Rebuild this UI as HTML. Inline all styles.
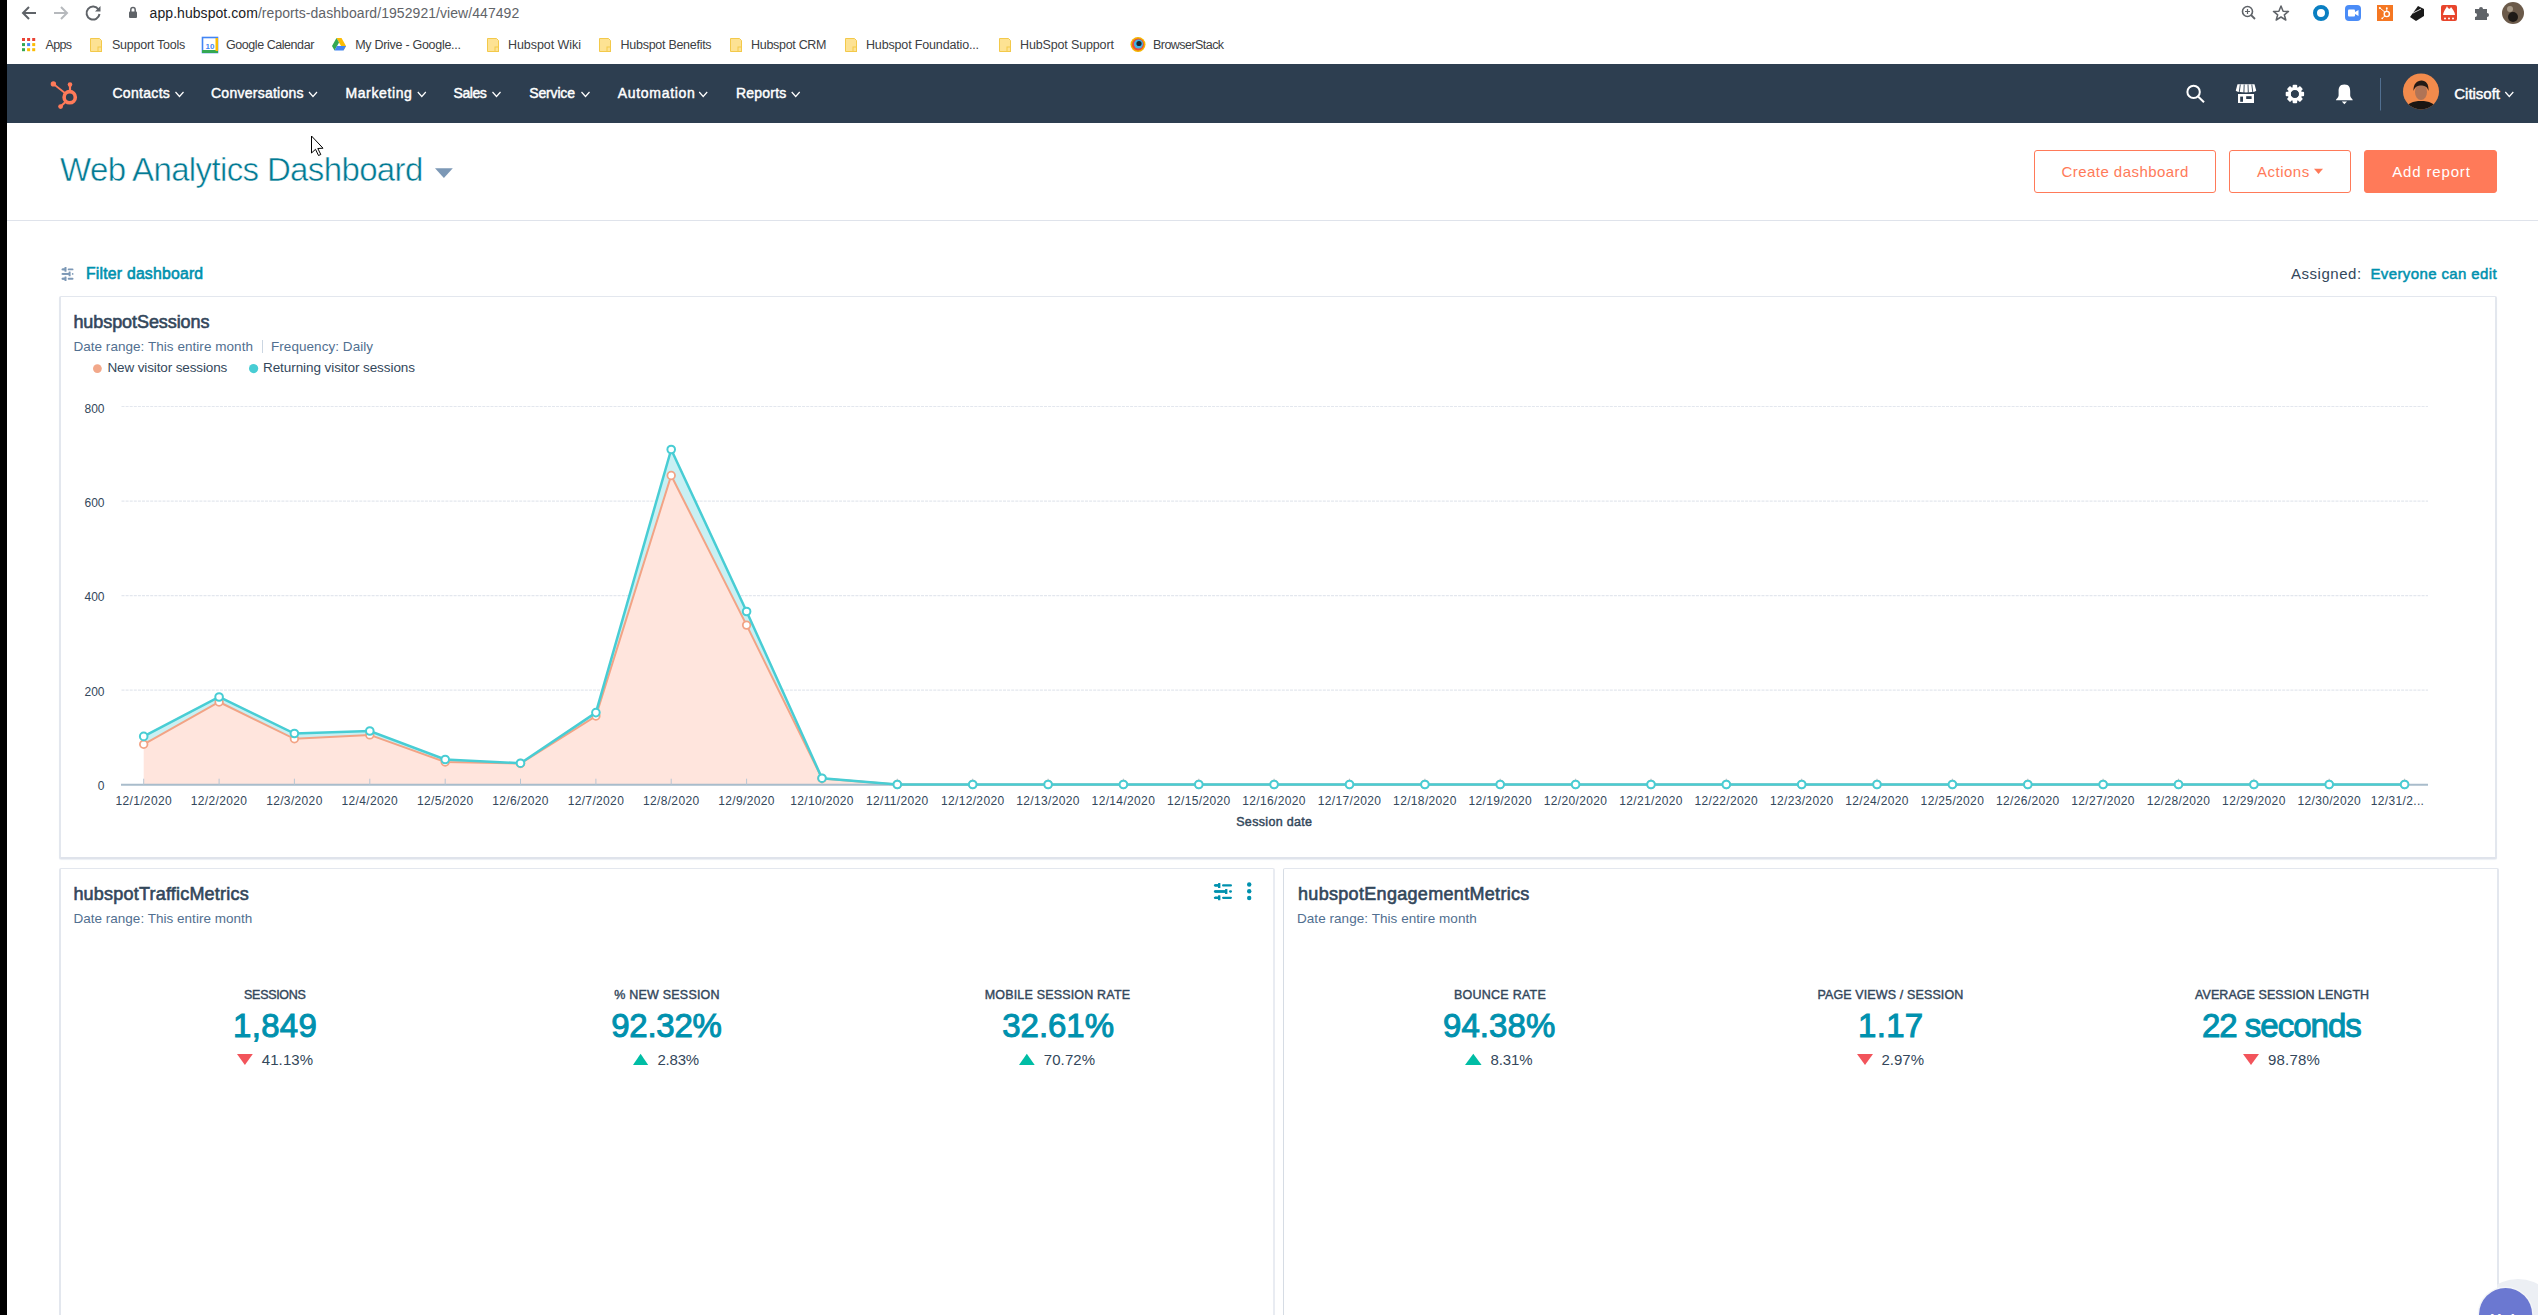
<!DOCTYPE html>
<html><head><meta charset="utf-8"><title>Web Analytics Dashboard</title>
<style>
html,body{margin:0;padding:0}
body{width:2538px;height:1315px;overflow:hidden;position:relative;background:#fff;font-family:"Liberation Sans",sans-serif;}
.t{position:absolute;white-space:nowrap;line-height:1;}
.abs{position:absolute;}
#strip{left:0;top:0;width:7px;height:1315px;background:#000;}
#nav{left:7px;top:64px;width:2531px;height:59px;background:#2d3e50;}
#hdiv{left:7px;top:220px;width:2531px;height:1px;background:#dfe3eb;}
.btn{position:absolute;box-sizing:border-box;border:1px solid #ff7a59;border-radius:3px;background:#fff;}
.card{position:absolute;box-sizing:border-box;border:1px solid #e3e7ee;border-left-width:2px;border-right-width:2px;border-radius:2px;background:#fff;}
svg{position:absolute;left:0;top:0;}
</style></head>
<body>
<div class="abs" id="strip"></div>
<div class="abs" id="nav"></div>
<div class="abs" id="hdiv"></div>

<!-- buttons -->
<div class="btn" style="left:2034px;top:150px;width:182px;height:43px;"></div>
<div class="btn" style="left:2229px;top:150px;width:122px;height:43px;"></div>
<div class="btn" style="left:2364px;top:150px;width:133px;height:43px;background:#ff7a59;"></div>

<!-- cards -->
<div class="card" style="left:59px;top:296px;width:2438px;height:563px;border-bottom:2px solid #dfe3eb;box-shadow:0 1px 1px #eceff4;"></div>
<div class="card" style="left:59px;top:868px;width:1216px;height:500px;border-right-color:#e9ecf2;"></div>
<div class="card" style="left:1282.5px;top:868px;width:1216.5px;height:500px;border-left:1.5px solid #d6dce4;"></div>

<svg width="2538" height="1315" viewBox="0 0 2538 1315" font-family="Liberation Sans">
<line x1="121.5" y1="406.5" x2="2428" y2="406.5" stroke="#e3e7ee" stroke-width="1.2" stroke-dasharray="3,1.1"/>
<line x1="121.5" y1="501.1" x2="2428" y2="501.1" stroke="#e3e7ee" stroke-width="1.2" stroke-dasharray="3,1.1"/>
<line x1="121.5" y1="595.6" x2="2428" y2="595.6" stroke="#e3e7ee" stroke-width="1.2" stroke-dasharray="3,1.1"/>
<line x1="121.5" y1="690.1" x2="2428" y2="690.1" stroke="#e3e7ee" stroke-width="1.2" stroke-dasharray="3,1.1"/>
<text x="104.5" y="412.8" font-size="12" fill="#33475b" text-anchor="end">800</text>
<text x="104.5" y="507.0" font-size="12" fill="#33475b" text-anchor="end">600</text>
<text x="104.5" y="601.3" font-size="12" fill="#33475b" text-anchor="end">400</text>
<text x="104.5" y="695.5" font-size="12" fill="#33475b" text-anchor="end">200</text>
<text x="104.5" y="789.7" font-size="12" fill="#33475b" text-anchor="end">0</text>
<polygon points="143.7,736.4 219.1,697.0 294.4,733.5 369.8,731.0 445.2,759.5 520.5,763.2 595.9,712.6 671.2,449.5 746.6,611.5 822.0,778.2 897.3,784.5 972.7,784.5 1048.1,784.5 1123.4,784.5 1198.8,784.5 1274.1,784.5 1349.5,784.5 1424.9,784.5 1500.2,784.5 1575.6,784.5 1651.0,784.5 1726.3,784.5 1801.7,784.5 1877.0,784.5 1952.4,784.5 2027.8,784.5 2103.1,784.5 2178.5,784.5 2253.9,784.5 2329.2,784.5 2404.6,784.5 2404.6,784.5 2329.2,784.5 2253.9,784.5 2178.5,784.5 2103.1,784.5 2027.8,784.5 1952.4,784.5 1877.0,784.5 1801.7,784.5 1726.3,784.5 1651.0,784.5 1575.6,784.5 1500.2,784.5 1424.9,784.5 1349.5,784.5 1274.1,784.5 1198.8,784.5 1123.4,784.5 1048.1,784.5 972.7,784.5 897.3,784.5 822.0,778.5 746.6,625.1 671.2,475.5 595.9,716.0 520.5,763.5 445.2,762.0 369.8,734.9 294.4,738.8 219.1,702.0 143.7,744.3" fill="#c9f0f3"/>
<polygon points="143.7,784.7 143.7,744.3 219.1,702.0 294.4,738.8 369.8,734.9 445.2,762.0 520.5,763.5 595.9,716.0 671.2,475.5 746.6,625.1 822.0,778.5 897.3,784.5 972.7,784.5 1048.1,784.5 1123.4,784.5 1198.8,784.5 1274.1,784.5 1349.5,784.5 1424.9,784.5 1500.2,784.5 1575.6,784.5 1651.0,784.5 1726.3,784.5 1801.7,784.5 1877.0,784.5 1952.4,784.5 2027.8,784.5 2103.1,784.5 2178.5,784.5 2253.9,784.5 2329.2,784.5 2404.6,784.5 2404.6,784.7" fill="#ffe5dd"/>
<line x1="121" y1="784.7" x2="2428" y2="784.7" stroke="#a9bccb" stroke-width="2"/>
<line x1="143.7" y1="778.7" x2="143.7" y2="784.7" stroke="#b8c6d3" stroke-width="1"/>
<line x1="219.1" y1="778.7" x2="219.1" y2="784.7" stroke="#b8c6d3" stroke-width="1"/>
<line x1="294.4" y1="778.7" x2="294.4" y2="784.7" stroke="#b8c6d3" stroke-width="1"/>
<line x1="369.8" y1="778.7" x2="369.8" y2="784.7" stroke="#b8c6d3" stroke-width="1"/>
<line x1="445.2" y1="778.7" x2="445.2" y2="784.7" stroke="#b8c6d3" stroke-width="1"/>
<line x1="520.5" y1="778.7" x2="520.5" y2="784.7" stroke="#b8c6d3" stroke-width="1"/>
<line x1="595.9" y1="778.7" x2="595.9" y2="784.7" stroke="#b8c6d3" stroke-width="1"/>
<line x1="671.2" y1="778.7" x2="671.2" y2="784.7" stroke="#b8c6d3" stroke-width="1"/>
<line x1="746.6" y1="778.7" x2="746.6" y2="784.7" stroke="#b8c6d3" stroke-width="1"/>
<line x1="822.0" y1="778.7" x2="822.0" y2="784.7" stroke="#b8c6d3" stroke-width="1"/>
<line x1="897.3" y1="778.7" x2="897.3" y2="784.7" stroke="#b8c6d3" stroke-width="1"/>
<line x1="972.7" y1="778.7" x2="972.7" y2="784.7" stroke="#b8c6d3" stroke-width="1"/>
<line x1="1048.1" y1="778.7" x2="1048.1" y2="784.7" stroke="#b8c6d3" stroke-width="1"/>
<line x1="1123.4" y1="778.7" x2="1123.4" y2="784.7" stroke="#b8c6d3" stroke-width="1"/>
<line x1="1198.8" y1="778.7" x2="1198.8" y2="784.7" stroke="#b8c6d3" stroke-width="1"/>
<line x1="1274.1" y1="778.7" x2="1274.1" y2="784.7" stroke="#b8c6d3" stroke-width="1"/>
<line x1="1349.5" y1="778.7" x2="1349.5" y2="784.7" stroke="#b8c6d3" stroke-width="1"/>
<line x1="1424.9" y1="778.7" x2="1424.9" y2="784.7" stroke="#b8c6d3" stroke-width="1"/>
<line x1="1500.2" y1="778.7" x2="1500.2" y2="784.7" stroke="#b8c6d3" stroke-width="1"/>
<line x1="1575.6" y1="778.7" x2="1575.6" y2="784.7" stroke="#b8c6d3" stroke-width="1"/>
<line x1="1651.0" y1="778.7" x2="1651.0" y2="784.7" stroke="#b8c6d3" stroke-width="1"/>
<line x1="1726.3" y1="778.7" x2="1726.3" y2="784.7" stroke="#b8c6d3" stroke-width="1"/>
<line x1="1801.7" y1="778.7" x2="1801.7" y2="784.7" stroke="#b8c6d3" stroke-width="1"/>
<line x1="1877.0" y1="778.7" x2="1877.0" y2="784.7" stroke="#b8c6d3" stroke-width="1"/>
<line x1="1952.4" y1="778.7" x2="1952.4" y2="784.7" stroke="#b8c6d3" stroke-width="1"/>
<line x1="2027.8" y1="778.7" x2="2027.8" y2="784.7" stroke="#b8c6d3" stroke-width="1"/>
<line x1="2103.1" y1="778.7" x2="2103.1" y2="784.7" stroke="#b8c6d3" stroke-width="1"/>
<line x1="2178.5" y1="778.7" x2="2178.5" y2="784.7" stroke="#b8c6d3" stroke-width="1"/>
<line x1="2253.9" y1="778.7" x2="2253.9" y2="784.7" stroke="#b8c6d3" stroke-width="1"/>
<line x1="2329.2" y1="778.7" x2="2329.2" y2="784.7" stroke="#b8c6d3" stroke-width="1"/>
<line x1="2404.6" y1="778.7" x2="2404.6" y2="784.7" stroke="#b8c6d3" stroke-width="1"/>
<polyline points="143.7,744.3 219.1,702.0 294.4,738.8 369.8,734.9 445.2,762.0 520.5,763.5 595.9,716.0 671.2,475.5 746.6,625.1 822.0,778.5 897.3,784.5 972.7,784.5 1048.1,784.5 1123.4,784.5 1198.8,784.5 1274.1,784.5 1349.5,784.5 1424.9,784.5 1500.2,784.5 1575.6,784.5 1651.0,784.5 1726.3,784.5 1801.7,784.5 1877.0,784.5 1952.4,784.5 2027.8,784.5 2103.1,784.5 2178.5,784.5 2253.9,784.5 2329.2,784.5 2404.6,784.5" fill="none" stroke="#f2a385" stroke-width="2"/>
<circle cx="143.7" cy="744.3" r="3.8" fill="#fff" stroke="#f2a385" stroke-width="1.8"/>
<circle cx="219.1" cy="702.0" r="3.8" fill="#fff" stroke="#f2a385" stroke-width="1.8"/>
<circle cx="294.4" cy="738.8" r="3.8" fill="#fff" stroke="#f2a385" stroke-width="1.8"/>
<circle cx="369.8" cy="734.9" r="3.8" fill="#fff" stroke="#f2a385" stroke-width="1.8"/>
<circle cx="445.2" cy="762.0" r="3.8" fill="#fff" stroke="#f2a385" stroke-width="1.8"/>
<circle cx="520.5" cy="763.5" r="3.8" fill="#fff" stroke="#f2a385" stroke-width="1.8"/>
<circle cx="595.9" cy="716.0" r="3.8" fill="#fff" stroke="#f2a385" stroke-width="1.8"/>
<circle cx="671.2" cy="475.5" r="3.8" fill="#fff" stroke="#f2a385" stroke-width="1.8"/>
<circle cx="746.6" cy="625.1" r="3.8" fill="#fff" stroke="#f2a385" stroke-width="1.8"/>
<circle cx="822.0" cy="778.5" r="3.8" fill="#fff" stroke="#f2a385" stroke-width="1.8"/>
<circle cx="897.3" cy="784.5" r="3.8" fill="#fff" stroke="#f2a385" stroke-width="1.8"/>
<circle cx="972.7" cy="784.5" r="3.8" fill="#fff" stroke="#f2a385" stroke-width="1.8"/>
<circle cx="1048.1" cy="784.5" r="3.8" fill="#fff" stroke="#f2a385" stroke-width="1.8"/>
<circle cx="1123.4" cy="784.5" r="3.8" fill="#fff" stroke="#f2a385" stroke-width="1.8"/>
<circle cx="1198.8" cy="784.5" r="3.8" fill="#fff" stroke="#f2a385" stroke-width="1.8"/>
<circle cx="1274.1" cy="784.5" r="3.8" fill="#fff" stroke="#f2a385" stroke-width="1.8"/>
<circle cx="1349.5" cy="784.5" r="3.8" fill="#fff" stroke="#f2a385" stroke-width="1.8"/>
<circle cx="1424.9" cy="784.5" r="3.8" fill="#fff" stroke="#f2a385" stroke-width="1.8"/>
<circle cx="1500.2" cy="784.5" r="3.8" fill="#fff" stroke="#f2a385" stroke-width="1.8"/>
<circle cx="1575.6" cy="784.5" r="3.8" fill="#fff" stroke="#f2a385" stroke-width="1.8"/>
<circle cx="1651.0" cy="784.5" r="3.8" fill="#fff" stroke="#f2a385" stroke-width="1.8"/>
<circle cx="1726.3" cy="784.5" r="3.8" fill="#fff" stroke="#f2a385" stroke-width="1.8"/>
<circle cx="1801.7" cy="784.5" r="3.8" fill="#fff" stroke="#f2a385" stroke-width="1.8"/>
<circle cx="1877.0" cy="784.5" r="3.8" fill="#fff" stroke="#f2a385" stroke-width="1.8"/>
<circle cx="1952.4" cy="784.5" r="3.8" fill="#fff" stroke="#f2a385" stroke-width="1.8"/>
<circle cx="2027.8" cy="784.5" r="3.8" fill="#fff" stroke="#f2a385" stroke-width="1.8"/>
<circle cx="2103.1" cy="784.5" r="3.8" fill="#fff" stroke="#f2a385" stroke-width="1.8"/>
<circle cx="2178.5" cy="784.5" r="3.8" fill="#fff" stroke="#f2a385" stroke-width="1.8"/>
<circle cx="2253.9" cy="784.5" r="3.8" fill="#fff" stroke="#f2a385" stroke-width="1.8"/>
<circle cx="2329.2" cy="784.5" r="3.8" fill="#fff" stroke="#f2a385" stroke-width="1.8"/>
<circle cx="2404.6" cy="784.5" r="3.8" fill="#fff" stroke="#f2a385" stroke-width="1.8"/>
<polyline points="143.7,736.4 219.1,697.0 294.4,733.5 369.8,731.0 445.2,759.5 520.5,763.2 595.9,712.6 671.2,449.5 746.6,611.5 822.0,778.2 897.3,784.5 972.7,784.5 1048.1,784.5 1123.4,784.5 1198.8,784.5 1274.1,784.5 1349.5,784.5 1424.9,784.5 1500.2,784.5 1575.6,784.5 1651.0,784.5 1726.3,784.5 1801.7,784.5 1877.0,784.5 1952.4,784.5 2027.8,784.5 2103.1,784.5 2178.5,784.5 2253.9,784.5 2329.2,784.5 2404.6,784.5" fill="none" stroke="#48cdd4" stroke-width="2.5"/>
<circle cx="143.7" cy="736.4" r="3.8" fill="#fff" stroke="#48cdd4" stroke-width="2"/>
<circle cx="219.1" cy="697.0" r="3.8" fill="#fff" stroke="#48cdd4" stroke-width="2"/>
<circle cx="294.4" cy="733.5" r="3.8" fill="#fff" stroke="#48cdd4" stroke-width="2"/>
<circle cx="369.8" cy="731.0" r="3.8" fill="#fff" stroke="#48cdd4" stroke-width="2"/>
<circle cx="445.2" cy="759.5" r="3.8" fill="#fff" stroke="#48cdd4" stroke-width="2"/>
<circle cx="520.5" cy="763.2" r="3.8" fill="#fff" stroke="#48cdd4" stroke-width="2"/>
<circle cx="595.9" cy="712.6" r="3.8" fill="#fff" stroke="#48cdd4" stroke-width="2"/>
<circle cx="671.2" cy="449.5" r="3.8" fill="#fff" stroke="#48cdd4" stroke-width="2"/>
<circle cx="746.6" cy="611.5" r="3.8" fill="#fff" stroke="#48cdd4" stroke-width="2"/>
<circle cx="822.0" cy="778.2" r="3.8" fill="#fff" stroke="#48cdd4" stroke-width="2"/>
<circle cx="897.3" cy="784.5" r="3.8" fill="#fff" stroke="#48cdd4" stroke-width="2"/>
<circle cx="972.7" cy="784.5" r="3.8" fill="#fff" stroke="#48cdd4" stroke-width="2"/>
<circle cx="1048.1" cy="784.5" r="3.8" fill="#fff" stroke="#48cdd4" stroke-width="2"/>
<circle cx="1123.4" cy="784.5" r="3.8" fill="#fff" stroke="#48cdd4" stroke-width="2"/>
<circle cx="1198.8" cy="784.5" r="3.8" fill="#fff" stroke="#48cdd4" stroke-width="2"/>
<circle cx="1274.1" cy="784.5" r="3.8" fill="#fff" stroke="#48cdd4" stroke-width="2"/>
<circle cx="1349.5" cy="784.5" r="3.8" fill="#fff" stroke="#48cdd4" stroke-width="2"/>
<circle cx="1424.9" cy="784.5" r="3.8" fill="#fff" stroke="#48cdd4" stroke-width="2"/>
<circle cx="1500.2" cy="784.5" r="3.8" fill="#fff" stroke="#48cdd4" stroke-width="2"/>
<circle cx="1575.6" cy="784.5" r="3.8" fill="#fff" stroke="#48cdd4" stroke-width="2"/>
<circle cx="1651.0" cy="784.5" r="3.8" fill="#fff" stroke="#48cdd4" stroke-width="2"/>
<circle cx="1726.3" cy="784.5" r="3.8" fill="#fff" stroke="#48cdd4" stroke-width="2"/>
<circle cx="1801.7" cy="784.5" r="3.8" fill="#fff" stroke="#48cdd4" stroke-width="2"/>
<circle cx="1877.0" cy="784.5" r="3.8" fill="#fff" stroke="#48cdd4" stroke-width="2"/>
<circle cx="1952.4" cy="784.5" r="3.8" fill="#fff" stroke="#48cdd4" stroke-width="2"/>
<circle cx="2027.8" cy="784.5" r="3.8" fill="#fff" stroke="#48cdd4" stroke-width="2"/>
<circle cx="2103.1" cy="784.5" r="3.8" fill="#fff" stroke="#48cdd4" stroke-width="2"/>
<circle cx="2178.5" cy="784.5" r="3.8" fill="#fff" stroke="#48cdd4" stroke-width="2"/>
<circle cx="2253.9" cy="784.5" r="3.8" fill="#fff" stroke="#48cdd4" stroke-width="2"/>
<circle cx="2329.2" cy="784.5" r="3.8" fill="#fff" stroke="#48cdd4" stroke-width="2"/>
<circle cx="2404.6" cy="784.5" r="3.8" fill="#fff" stroke="#48cdd4" stroke-width="2"/>
<text x="143.7" y="804.7" font-size="12" fill="#33475b" text-anchor="middle" letter-spacing="0.35">12/1/2020</text>
<text x="219.1" y="804.7" font-size="12" fill="#33475b" text-anchor="middle" letter-spacing="0.35">12/2/2020</text>
<text x="294.4" y="804.7" font-size="12" fill="#33475b" text-anchor="middle" letter-spacing="0.35">12/3/2020</text>
<text x="369.8" y="804.7" font-size="12" fill="#33475b" text-anchor="middle" letter-spacing="0.35">12/4/2020</text>
<text x="445.2" y="804.7" font-size="12" fill="#33475b" text-anchor="middle" letter-spacing="0.35">12/5/2020</text>
<text x="520.5" y="804.7" font-size="12" fill="#33475b" text-anchor="middle" letter-spacing="0.35">12/6/2020</text>
<text x="595.9" y="804.7" font-size="12" fill="#33475b" text-anchor="middle" letter-spacing="0.35">12/7/2020</text>
<text x="671.2" y="804.7" font-size="12" fill="#33475b" text-anchor="middle" letter-spacing="0.35">12/8/2020</text>
<text x="746.6" y="804.7" font-size="12" fill="#33475b" text-anchor="middle" letter-spacing="0.35">12/9/2020</text>
<text x="822.0" y="804.7" font-size="12" fill="#33475b" text-anchor="middle" letter-spacing="0.35">12/10/2020</text>
<text x="897.3" y="804.7" font-size="12" fill="#33475b" text-anchor="middle" letter-spacing="0.35">12/11/2020</text>
<text x="972.7" y="804.7" font-size="12" fill="#33475b" text-anchor="middle" letter-spacing="0.35">12/12/2020</text>
<text x="1048.1" y="804.7" font-size="12" fill="#33475b" text-anchor="middle" letter-spacing="0.35">12/13/2020</text>
<text x="1123.4" y="804.7" font-size="12" fill="#33475b" text-anchor="middle" letter-spacing="0.35">12/14/2020</text>
<text x="1198.8" y="804.7" font-size="12" fill="#33475b" text-anchor="middle" letter-spacing="0.35">12/15/2020</text>
<text x="1274.1" y="804.7" font-size="12" fill="#33475b" text-anchor="middle" letter-spacing="0.35">12/16/2020</text>
<text x="1349.5" y="804.7" font-size="12" fill="#33475b" text-anchor="middle" letter-spacing="0.35">12/17/2020</text>
<text x="1424.9" y="804.7" font-size="12" fill="#33475b" text-anchor="middle" letter-spacing="0.35">12/18/2020</text>
<text x="1500.2" y="804.7" font-size="12" fill="#33475b" text-anchor="middle" letter-spacing="0.35">12/19/2020</text>
<text x="1575.6" y="804.7" font-size="12" fill="#33475b" text-anchor="middle" letter-spacing="0.35">12/20/2020</text>
<text x="1651.0" y="804.7" font-size="12" fill="#33475b" text-anchor="middle" letter-spacing="0.35">12/21/2020</text>
<text x="1726.3" y="804.7" font-size="12" fill="#33475b" text-anchor="middle" letter-spacing="0.35">12/22/2020</text>
<text x="1801.7" y="804.7" font-size="12" fill="#33475b" text-anchor="middle" letter-spacing="0.35">12/23/2020</text>
<text x="1877.0" y="804.7" font-size="12" fill="#33475b" text-anchor="middle" letter-spacing="0.35">12/24/2020</text>
<text x="1952.4" y="804.7" font-size="12" fill="#33475b" text-anchor="middle" letter-spacing="0.35">12/25/2020</text>
<text x="2027.8" y="804.7" font-size="12" fill="#33475b" text-anchor="middle" letter-spacing="0.35">12/26/2020</text>
<text x="2103.1" y="804.7" font-size="12" fill="#33475b" text-anchor="middle" letter-spacing="0.35">12/27/2020</text>
<text x="2178.5" y="804.7" font-size="12" fill="#33475b" text-anchor="middle" letter-spacing="0.35">12/28/2020</text>
<text x="2253.9" y="804.7" font-size="12" fill="#33475b" text-anchor="middle" letter-spacing="0.35">12/29/2020</text>
<text x="2329.2" y="804.7" font-size="12" fill="#33475b" text-anchor="middle" letter-spacing="0.35">12/30/2020</text>
<text x="2397.5" y="804.7" font-size="12" fill="#33475b" text-anchor="middle" letter-spacing="0.35">12/31/2...</text>
<path d="M36 13 H23 M29 7 L23 13 L29 19" fill="none" stroke="#5f6368" stroke-width="2"/>
<path d="M54 13 H67 M61 7 L67 13 L61 19" fill="none" stroke="#b6b9bd" stroke-width="2"/>
<path d="M98.5 9.5 A6.5 6.5 0 1 0 99.5 14" fill="none" stroke="#5f6368" stroke-width="2"/><path d="M100.5 6 V11.5 H95 Z" fill="#5f6368"/>
<rect x="129" y="11.5" width="8" height="6.5" rx="1" fill="#5f6368"/><path d="M130.8 12 V9.8 A2.2 2.2 0 0 1 135.2 9.8 V12" fill="none" stroke="#5f6368" stroke-width="1.5"/>
<circle cx="2247.5" cy="11.5" r="5" fill="none" stroke="#5f6368" stroke-width="1.6"/><path d="M2251 15 L2255 19" stroke="#5f6368" stroke-width="1.8"/><path d="M2245 11.5 H2250 M2247.5 9 V14" stroke="#5f6368" stroke-width="1.2"/>
<path d="M2281 6 L2283.1 11.2 L2288.5 11.4 L2284.3 14.8 L2285.8 20 L2281 17 L2276.2 20 L2277.7 14.8 L2273.5 11.4 L2278.9 11.2 Z" fill="none" stroke="#5f6368" stroke-width="1.5" stroke-linejoin="round"/>
<circle cx="2321" cy="13" r="6" fill="none" stroke="#0a7fc2" stroke-width="4"/>
<rect x="2345" y="5" width="16" height="16" rx="4" fill="#4a8cf7"/><rect x="2348" y="9.5" width="7" height="7" rx="1" fill="#fff"/><path d="M2355 12 L2358.5 10 V16 L2355 14 Z" fill="#fff"/>
<rect x="2377" y="5" width="16" height="16" fill="#f57722"/><circle cx="2386.8" cy="14" r="2.6" fill="none" stroke="#fff" stroke-width="1.4"/><path d="M2380 8 L2385 12.3 M2386.8 8.5 V11.4 M2385 15.8 L2382.3 18.2" stroke="#fff" stroke-width="1"/><circle cx="2379.8" cy="7.9" r="1" fill="#fff"/><circle cx="2386.8" cy="8.2" r="0.9" fill="#fff"/><circle cx="2382.2" cy="18.3" r="0.9" fill="#fff"/>
<path d="M2410 17 L2418 6 L2424 9 L2424 16 L2416 21 Z" fill="#1a1a1a"/><path d="M2413 13 L2421 9" stroke="#ddd" stroke-width="1"/>
<rect x="2441" y="5" width="16" height="16" rx="2" fill="#e8452c"/><path d="M2443 15 C2444 10 2446 9 2447 6 C2448 9 2450 10 2451 7 C2453 10 2455 12 2455 15 Z" fill="#fff"/><circle cx="2445" cy="18.5" r="1" fill="#fff"/><circle cx="2449" cy="18.5" r="1" fill="#fff"/><circle cx="2453" cy="18.5" r="1" fill="#fff"/>
<path d="M2475 9 H2479 A2 2 0 0 1 2483 9 H2487 V13 A2 2 0 0 1 2487 17 V20 H2475 V17 A2 2 0 0 0 2475 13 Z" fill="#5f6368"/>
<circle cx="2513" cy="13" r="11" fill="#6b5a4a"/><circle cx="2513" cy="17" r="5" fill="#1e1a17"/><circle cx="2510" cy="9" r="3" fill="#a89a88"/>
<rect x="22.0" y="38.0" width="3" height="3" fill="#ea4335"/>
<rect x="27.1" y="38.0" width="3" height="3" fill="#ea4335"/>
<rect x="32.2" y="38.0" width="3" height="3" fill="#ea4335"/>
<rect x="22.0" y="43.1" width="3" height="3" fill="#34a853"/>
<rect x="27.1" y="43.1" width="3" height="3" fill="#4285f4"/>
<rect x="32.2" y="43.1" width="3" height="3" fill="#fbbc05"/>
<rect x="22.0" y="48.2" width="3" height="3" fill="#34a853"/>
<rect x="27.1" y="48.2" width="3" height="3" fill="#fbbc05"/>
<rect x="32.2" y="48.2" width="3" height="3" fill="#fbbc05"/>
<path d="M90.5 38.5 H99.5 L101.5 40.5 V51.5 H90.5 Z" fill="#fde293" stroke="#f3c94a" stroke-width="1"/><rect x="98" y="47" width="3.5" height="4.5" fill="#fde293" stroke="#f3c94a" stroke-width="1"/>
<path d="M487.5 38.5 H496.5 L498.5 40.5 V51.5 H487.5 Z" fill="#fde293" stroke="#f3c94a" stroke-width="1"/><rect x="495" y="47" width="3.5" height="4.5" fill="#fde293" stroke="#f3c94a" stroke-width="1"/>
<path d="M599.5 38.5 H608.5 L610.5 40.5 V51.5 H599.5 Z" fill="#fde293" stroke="#f3c94a" stroke-width="1"/><rect x="607" y="47" width="3.5" height="4.5" fill="#fde293" stroke="#f3c94a" stroke-width="1"/>
<path d="M730.5 38.5 H739.5 L741.5 40.5 V51.5 H730.5 Z" fill="#fde293" stroke="#f3c94a" stroke-width="1"/><rect x="738" y="47" width="3.5" height="4.5" fill="#fde293" stroke="#f3c94a" stroke-width="1"/>
<path d="M845.5 38.5 H854.5 L856.5 40.5 V51.5 H845.5 Z" fill="#fde293" stroke="#f3c94a" stroke-width="1"/><rect x="853" y="47" width="3.5" height="4.5" fill="#fde293" stroke="#f3c94a" stroke-width="1"/>
<path d="M999.5 38.5 H1008.5 L1010.5 40.5 V51.5 H999.5 Z" fill="#fde293" stroke="#f3c94a" stroke-width="1"/><rect x="1007" y="47" width="3.5" height="4.5" fill="#fde293" stroke="#f3c94a" stroke-width="1"/>
<rect x="202.5" y="37.5" width="15" height="15" fill="#fff" stroke="#4285f4" stroke-width="1.6"/><rect x="202" y="50" width="16" height="3" fill="#34a853"/><rect x="215.5" y="38" width="2.5" height="13" fill="#fbbc05"/><text x="210" y="48.5" font-size="8" fill="#4285f4" text-anchor="middle" font-weight="bold">10</text>
<path d="M336.5 38 H341.5 L346 46 L343.5 50.5 Z" fill="#fbbc05"/><path d="M336.5 38 L332 46 L334.5 50.5 L339 42.5 Z" fill="#34a853"/><path d="M334.5 50.5 H343.5 L346 46 H337 Z" fill="#4285f4"/>
<circle cx="1138" cy="44.5" r="7.5" fill="#f4b400"/><circle cx="1138" cy="44.5" r="6" fill="#e94e3a"/><circle cx="1138.5" cy="44" r="4.5" fill="#3fb5e8"/><circle cx="1139" cy="43.5" r="2.6" fill="#1a2530"/>
<circle cx="69.7" cy="97.2" r="5.6" fill="none" stroke="#ff7a59" stroke-width="3.6"/>
<line x1="70" y1="85" x2="70" y2="91" stroke="#ff7a59" stroke-width="2.2"/><circle cx="70" cy="84.6" r="2.3" fill="#ff7a59"/>
<line x1="53.5" y1="84" x2="65.5" y2="93.5" stroke="#ff7a59" stroke-width="1.7"/><circle cx="53.4" cy="83.9" r="2.7" fill="#ff7a59"/>
<line x1="60.5" y1="106.5" x2="66" y2="101.5" stroke="#ff7a59" stroke-width="2.2"/><circle cx="60.6" cy="106.6" r="2.4" fill="#ff7a59"/>
<path d="M175.5 92 L179.5 96.5 L183.5 92" fill="none" stroke="#fff" stroke-width="1.2"/>
<path d="M309 92 L313 96.5 L317 92" fill="none" stroke="#fff" stroke-width="1.2"/>
<path d="M417.8 92 L421.8 96.5 L425.8 92" fill="none" stroke="#fff" stroke-width="1.2"/>
<path d="M492.5 92 L496.5 96.5 L500.5 92" fill="none" stroke="#fff" stroke-width="1.2"/>
<path d="M581.5 92 L585.5 96.5 L589.5 92" fill="none" stroke="#fff" stroke-width="1.2"/>
<path d="M699.2 92 L703.2 96.5 L707.2 92" fill="none" stroke="#fff" stroke-width="1.2"/>
<path d="M791.7 92 L795.7 96.5 L799.7 92" fill="none" stroke="#fff" stroke-width="1.2"/>
<path d="M2505.3 92 L2509.3 96.5 L2513.3 92" fill="none" stroke="#fff" stroke-width="1.2"/>
<circle cx="2193.6" cy="91.9" r="6.2" fill="none" stroke="#fff" stroke-width="2"/><path d="M2198.3 96.8 L2204 102.3" stroke="#fff" stroke-width="2"/>
<path d="M2237.5 84.2 H2254.5 L2256.2 90.5 C2256.2 93 2235.8 93 2235.8 90.5 Z" fill="#fff"/><path d="M2240.3 84.5 L2239.2 92.5 M2244.2 84.5 L2243.9 92.5 M2248 84.5 L2248.3 92.5 M2251.8 84.5 L2252.8 92.5" stroke="#2d3e50" stroke-width="0.9"/><path d="M2238 94 H2254 V103 H2238 Z" fill="#fff"/><rect x="2240.2" y="96.6" width="2.8" height="5.2" fill="#2d3e50"/><rect x="2246.2" y="96.2" width="5.4" height="2.8" fill="#2d3e50"/>
<rect x="2292.6" y="84.8" width="4.6" height="5" rx="1" fill="#fff" transform="rotate(0 2294.9 94)"/><rect x="2292.6" y="84.8" width="4.6" height="5" rx="1" fill="#fff" transform="rotate(45 2294.9 94)"/><rect x="2292.6" y="84.8" width="4.6" height="5" rx="1" fill="#fff" transform="rotate(90 2294.9 94)"/><rect x="2292.6" y="84.8" width="4.6" height="5" rx="1" fill="#fff" transform="rotate(135 2294.9 94)"/><rect x="2292.6" y="84.8" width="4.6" height="5" rx="1" fill="#fff" transform="rotate(180 2294.9 94)"/><rect x="2292.6" y="84.8" width="4.6" height="5" rx="1" fill="#fff" transform="rotate(225 2294.9 94)"/><rect x="2292.6" y="84.8" width="4.6" height="5" rx="1" fill="#fff" transform="rotate(270 2294.9 94)"/><rect x="2292.6" y="84.8" width="4.6" height="5" rx="1" fill="#fff" transform="rotate(315 2294.9 94)"/><circle cx="2294.9" cy="94" r="5.6" fill="none" stroke="#fff" stroke-width="3"/>
<path d="M2344.4 84.4 C2349.5 84.4 2350.2 88 2350.2 91.5 V95.5 C2350.2 97.5 2352.8 99 2352.8 100.3 H2335.9 C2335.9 99 2338.6 97.5 2338.6 95.5 V91.5 C2338.6 88 2339.3 84.4 2344.4 84.4 Z" fill="#fff"/><path d="M2341.8 101.5 H2347 L2344.4 104.3 Z" fill="#fff"/>
<line x1="2380.5" y1="78" x2="2380.5" y2="110.5" stroke="#516f90" stroke-width="1"/>
<circle cx="2421" cy="91.4" r="18" fill="#f28b4c"/><clipPath id="av"><circle cx="2421" cy="91.4" r="18"/></clipPath><g clip-path="url(#av)"><path d="M2405 110 C2407 103 2413 101 2421 101 C2429 101 2435 103 2437 110 Z" fill="#1b1613"/><ellipse cx="2421" cy="92" rx="6" ry="8" fill="#b07456"/><path d="M2413.5 91 C2413 84 2417 80.5 2421.5 80.5 C2426 80.5 2429 84 2428.5 91 C2427 86 2424 85.5 2421 85.5 C2418 85.5 2415 86.5 2413.5 91 Z" fill="#231a16"/></g>
<path d="M435 168.3 H452.8 L443.9 178 Z" fill="#7c98b6"/>
<path d="M2314 168.8 H2323 L2318.5 174 Z" fill="#ff7a59"/>
<rect x="61.5" y="268.45" width="4.00" height="1.9" rx="0.95" fill="#7c98b6"/><rect x="62.45" y="268.45" width="3.05" height="1.9" fill="#7c98b6"/><rect x="64.50" y="267.10" width="2.0" height="4.6" rx="0.5" fill="#7c98b6"/><rect x="67.70" y="268.45" width="5.80" height="1.9" rx="0.95" fill="#7c98b6"/><rect x="61.5" y="272.95" width="8.10" height="1.9" rx="0.95" fill="#7c98b6"/><rect x="62.45" y="272.95" width="7.15" height="1.9" fill="#7c98b6"/><rect x="68.60" y="271.60" width="2.0" height="4.6" rx="0.5" fill="#7c98b6"/><rect x="71.80" y="272.95" width="1.70" height="1.9" rx="0.95" fill="#7c98b6"/><rect x="61.5" y="277.75" width="4.00" height="1.9" rx="0.95" fill="#7c98b6"/><rect x="62.45" y="277.75" width="3.05" height="1.9" fill="#7c98b6"/><rect x="64.50" y="276.40" width="2.0" height="4.6" rx="0.5" fill="#7c98b6"/><rect x="67.70" y="277.75" width="5.80" height="1.9" rx="0.95" fill="#7c98b6"/>
<rect x="1213.8" y="884.25" width="5.40" height="2.3" rx="1.15" fill="#0091ae"/><rect x="1214.95" y="884.25" width="4.25" height="2.3" fill="#0091ae"/><rect x="1218.00" y="882.90" width="2.4" height="5.0" rx="0.5" fill="#0091ae"/><rect x="1222.00" y="884.25" width="10.00" height="2.3" rx="1.15" fill="#0091ae"/><rect x="1213.8" y="890.35" width="12.40" height="2.3" rx="1.15" fill="#0091ae"/><rect x="1214.95" y="890.35" width="11.25" height="2.3" fill="#0091ae"/><rect x="1225.00" y="889.00" width="2.4" height="5.0" rx="0.5" fill="#0091ae"/><rect x="1229.00" y="890.35" width="3.00" height="2.3" rx="1.15" fill="#0091ae"/><rect x="1213.8" y="896.65" width="5.40" height="2.3" rx="1.15" fill="#0091ae"/><rect x="1214.95" y="896.65" width="4.25" height="2.3" fill="#0091ae"/><rect x="1218.00" y="895.30" width="2.4" height="5.0" rx="0.5" fill="#0091ae"/><rect x="1222.00" y="896.65" width="10.00" height="2.3" rx="1.15" fill="#0091ae"/>
<circle cx="1249.2" cy="884.5" r="2.2" fill="#0091ae"/>
<circle cx="1249.2" cy="891.3" r="2.2" fill="#0091ae"/>
<circle cx="1249.2" cy="898.0" r="2.2" fill="#0091ae"/>
<line x1="262.5" y1="340" x2="262.5" y2="353" stroke="#cbd6e2" stroke-width="1"/>
<circle cx="97.4" cy="368.6" r="4.4" fill="#f2a88a"/><circle cx="253.6" cy="368.6" r="4.6" fill="#48cdd4"/>
<path d="M237 1054 H252.8 L244.9 1065 Z" fill="#f2545b"/>
<path d="M633 1065 H648.2 L640.6 1053.8 Z" fill="#00bda5"/>
<path d="M1019 1065 H1034.7 L1026.8 1053.8 Z" fill="#00bda5"/>
<path d="M1465 1065 H1481.6 L1473.3 1053.8 Z" fill="#00bda5"/>
<path d="M1857 1054 H1873 L1865.0 1065 Z" fill="#f2545b"/>
<path d="M2243 1054 H2259 L2251.0 1065 Z" fill="#f2545b"/>
<path d="M311.5 136 V153 L315.5 149.3 L318.5 155.5 L320.8 154.5 L317.8 148.5 L323 148.2 Z" fill="#fff" stroke="#000" stroke-width="1"/>
<clipPath id="hc"><rect x="2497" y="1270" width="45" height="50"/></clipPath><circle cx="2518" cy="1320" r="41" fill="#eceff4" clip-path="url(#hc)"/><circle cx="2505.6" cy="1314.6" r="28" fill="#f3f5f8"/><circle cx="2505.6" cy="1314.6" r="26.6" fill="#6b78d1"/><text x="2490" y="1326" font-size="16" font-weight="bold" fill="#fff">Help</text>
</svg>

<div class="t" id="url" style="left:149.60px;top:6.10px;font-size:14px;color:#202124;letter-spacing:0.058px;">app.hubspot.com<span style="color:#5f6368">/reports-dashboard/1952921/view/447492</span></div>
<div class="t" id="bm1" style="left:45.60px;top:38.88px;font-size:12.5px;color:#3c4043;letter-spacing:-0.667px;">Apps</div>
<div class="t" id="bm2" style="left:112.00px;top:38.88px;font-size:12.5px;color:#3c4043;letter-spacing:-0.250px;">Support Tools</div>
<div class="t" id="bm3" style="left:226.00px;top:38.88px;font-size:12.5px;color:#3c4043;letter-spacing:-0.443px;">Google Calendar</div>
<div class="t" id="bm4" style="left:355.20px;top:38.88px;font-size:12.5px;color:#3c4043;letter-spacing:-0.284px;">My Drive - Google...</div>
<div class="t" id="bm5" style="left:508.00px;top:38.88px;font-size:12.5px;color:#3c4043;letter-spacing:-0.055px;">Hubspot Wiki</div>
<div class="t" id="bm6" style="left:620.60px;top:38.88px;font-size:12.5px;color:#3c4043;letter-spacing:-0.280px;">Hubspot Benefits</div>
<div class="t" id="bm7" style="left:751.00px;top:38.88px;font-size:12.5px;color:#3c4043;letter-spacing:-0.300px;">Hubspot CRM</div>
<div class="t" id="bm8" style="left:866.00px;top:38.88px;font-size:12.5px;color:#3c4043;letter-spacing:-0.158px;">Hubspot Foundatio...</div>
<div class="t" id="bm9" style="left:1020.00px;top:38.88px;font-size:12.5px;color:#3c4043;letter-spacing:-0.143px;">HubSpot Support</div>
<div class="t" id="bm10" style="left:1153.00px;top:38.88px;font-size:12.5px;color:#3c4043;letter-spacing:-0.545px;">BrowserStack</div>
<div class="t" id="nv1" style="left:112.40px;top:86.40px;font-size:14px;color:#ffffff;letter-spacing:0.314px;-webkit-text-stroke:0.45px #ffffff;">Contacts</div>
<div class="t" id="nv2" style="left:211.00px;top:86.40px;font-size:14px;color:#ffffff;letter-spacing:0.250px;-webkit-text-stroke:0.45px #ffffff;">Conversations</div>
<div class="t" id="nv3" style="left:345.40px;top:86.40px;font-size:14px;color:#ffffff;letter-spacing:0.625px;-webkit-text-stroke:0.45px #ffffff;">Marketing</div>
<div class="t" id="nv4" style="left:453.50px;top:86.40px;font-size:14px;color:#ffffff;letter-spacing:-0.450px;-webkit-text-stroke:0.45px #ffffff;">Sales</div>
<div class="t" id="nv5" style="left:529.30px;top:86.40px;font-size:14px;color:#ffffff;letter-spacing:-0.167px;-webkit-text-stroke:0.45px #ffffff;">Service</div>
<div class="t" id="nv6" style="left:617.70px;top:86.40px;font-size:14px;color:#ffffff;letter-spacing:0.711px;-webkit-text-stroke:0.45px #ffffff;">Automation</div>
<div class="t" id="nv7" style="left:736.00px;top:86.40px;font-size:14px;color:#ffffff;letter-spacing:0.200px;-webkit-text-stroke:0.45px #ffffff;">Reports</div>
<div class="t" id="nv8" style="left:2454.30px;top:85.75px;font-size:15px;color:#ffffff;letter-spacing:-0.029px;-webkit-text-stroke:0.45px #ffffff;">Citisoft</div>
<div class="t" id="title" style="left:60.00px;top:152.95px;font-size:33px;color:#037a93;letter-spacing:-0.636px;-webkit-text-stroke:0.5px #fff;">Web Analytics Dashboard</div>
<div class="t" id="filter" style="left:86.00px;top:265.87px;font-size:15.8px;color:#0091ae;letter-spacing:0.200px;-webkit-text-stroke:0.60px #0091ae;">Filter dashboard</div>
<div class="t" id="btn1" style="left:2061.50px;top:164.45px;font-size:15px;color:#ff7a59;letter-spacing:0.453px;">Create dashboard</div>
<div class="t" id="btn2" style="left:2257.00px;top:164.45px;font-size:15px;color:#ff7a59;letter-spacing:0.500px;">Actions</div>
<div class="t" id="btn3" style="left:2392.20px;top:164.45px;font-size:15px;color:#ffffff;letter-spacing:0.844px;">Add report</div>
<div class="t" id="asg1" style="left:2291.00px;top:266.25px;font-size:15px;color:#33475b;letter-spacing:0.525px;">Assigned:</div>
<div class="t" id="asg2" style="left:2370.40px;top:266.25px;font-size:15px;color:#0091ae;letter-spacing:0.388px;-webkit-text-stroke:0.50px #0091ae;">Everyone can edit</div>
<div class="t" id="ch_t" style="left:73.40px;top:312.70px;font-size:18px;color:#33475b;letter-spacing:-0.071px;-webkit-text-stroke:0.60px #33475b;">hubspotSessions</div>
<div class="t" id="ch_d1" style="left:73.40px;top:339.92px;font-size:13.5px;color:#516f90;letter-spacing:0.043px;">Date range: This entire month</div>
<div class="t" id="ch_d2" style="left:271.00px;top:339.92px;font-size:13.5px;color:#516f90;letter-spacing:0.053px;">Frequency: Daily</div>
<div class="t" id="lg1" style="left:107.40px;top:360.82px;font-size:13.5px;color:#33475b;letter-spacing:-0.126px;">New visitor sessions</div>
<div class="t" id="lg2" style="left:263.00px;top:360.82px;font-size:13.5px;color:#33475b;letter-spacing:-0.072px;">Returning visitor sessions</div>
<div class="t" id="xt" style="left:1236.20px;top:816.38px;font-size:12.5px;color:#33475b;letter-spacing:0.327px;-webkit-text-stroke:0.45px #33475b;">Session date</div>
<div class="t" id="tr_t" style="left:73.40px;top:884.70px;font-size:18px;color:#33475b;letter-spacing:0.210px;-webkit-text-stroke:0.60px #33475b;">hubspotTrafficMetrics</div>
<div class="t" id="tr_d" style="left:73.40px;top:912.02px;font-size:13.5px;color:#516f90;letter-spacing:0.021px;">Date range: This entire month</div>
<div class="t" id="en_t" style="left:1298.00px;top:884.70px;font-size:18px;color:#33475b;letter-spacing:0.313px;-webkit-text-stroke:0.60px #33475b;">hubspotEngagementMetrics</div>
<div class="t" id="en_d" style="left:1297.00px;top:912.02px;font-size:13.5px;color:#516f90;letter-spacing:0.050px;">Date range: This entire month</div>
<div class="t" id="ml0" style="left:244.10px;top:988.58px;font-size:12.5px;color:#33475b;letter-spacing:-0.314px;-webkit-text-stroke:0.40px #33475b;">SESSIONS</div>
<div class="t" id="mv0" style="left:233.10px;top:1009.35px;font-size:33px;color:#0091ae;letter-spacing:0.300px;-webkit-text-stroke:1.00px #0091ae;">1,849</div>
<div class="t" id="mc0" style="left:261.70px;top:1051.65px;font-size:15px;color:#33475b;letter-spacing:0.120px;">41.13%</div>
<div class="t" id="ml1" style="left:614.20px;top:988.58px;font-size:12.5px;color:#33475b;letter-spacing:0.217px;-webkit-text-stroke:0.40px #33475b;">% NEW SESSION</div>
<div class="t" id="mv1" style="left:611.30px;top:1009.35px;font-size:33px;color:#0091ae;letter-spacing:-0.280px;-webkit-text-stroke:1.00px #0091ae;">92.32%</div>
<div class="t" id="mc1" style="left:657.40px;top:1051.65px;font-size:15px;color:#33475b;letter-spacing:-0.200px;">2.83%</div>
<div class="t" id="ml2" style="left:984.70px;top:988.58px;font-size:12.5px;color:#33475b;letter-spacing:0.178px;-webkit-text-stroke:0.40px #33475b;">MOBILE SESSION RATE</div>
<div class="t" id="mv2" style="left:1002.30px;top:1009.35px;font-size:33px;color:#0091ae;letter-spacing:-0.040px;-webkit-text-stroke:1.00px #0091ae;">32.61%</div>
<div class="t" id="mc2" style="left:1043.70px;top:1051.65px;font-size:15px;color:#33475b;letter-spacing:0.120px;">70.72%</div>
<div class="t" id="ml3" style="left:1454.00px;top:988.58px;font-size:12.5px;color:#33475b;letter-spacing:0.240px;-webkit-text-stroke:0.40px #33475b;">BOUNCE RATE</div>
<div class="t" id="mv3" style="left:1443.00px;top:1009.35px;font-size:33px;color:#0091ae;letter-spacing:0.080px;-webkit-text-stroke:1.00px #0091ae;">94.38%</div>
<div class="t" id="mc3" style="left:1490.40px;top:1051.65px;font-size:15px;color:#33475b;letter-spacing:-0.100px;">8.31%</div>
<div class="t" id="ml4" style="left:1817.40px;top:988.58px;font-size:12.5px;color:#33475b;letter-spacing:0.126px;-webkit-text-stroke:0.40px #33475b;">PAGE VIEWS / SESSION</div>
<div class="t" id="mv4" style="left:1858.00px;top:1009.35px;font-size:33px;color:#0091ae;letter-spacing:0.333px;-webkit-text-stroke:1.00px #0091ae;">1.17</div>
<div class="t" id="mc4" style="left:1881.50px;top:1051.65px;font-size:15px;color:#33475b;">2.97%</div>
<div class="t" id="ml5" style="left:2195.00px;top:988.58px;font-size:12.5px;color:#33475b;letter-spacing:0.067px;-webkit-text-stroke:0.40px #33475b;">AVERAGE SESSION LENGTH</div>
<div class="t" id="mv5" style="left:2202.00px;top:1009.35px;font-size:33px;color:#0091ae;letter-spacing:-1.000px;-webkit-text-stroke:1.00px #0091ae;">22 seconds</div>
<div class="t" id="mc5" style="left:2268.00px;top:1051.65px;font-size:15px;color:#33475b;letter-spacing:0.200px;">98.78%</div>

</body></html>
